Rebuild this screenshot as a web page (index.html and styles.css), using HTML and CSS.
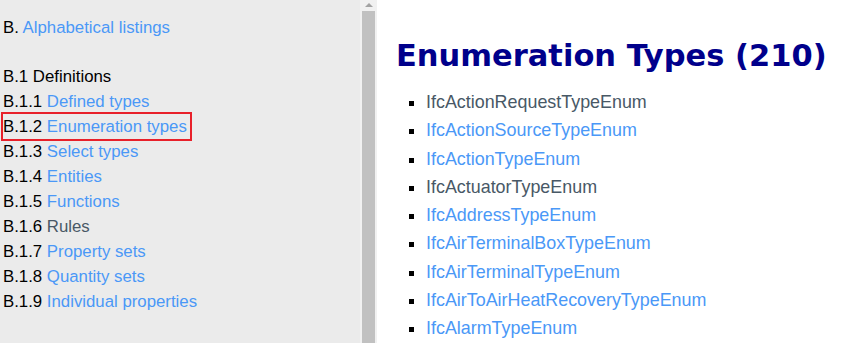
FILE: index.html
```html
<!DOCTYPE html>
<html lang="en">
<head>
    <meta charset="UTF-8">
    <title>Enumeration Types</title>
    <link rel="stylesheet" href="styles.css">
</head>
<body>
    <div class="frames">
        <div class="nav">
            <div class="nav-title">B. <a href="#">Alphabetical listings</a></div>
            <div class="nav-item">B.1 Definitions</div>
            <div class="nav-item">B.1.1 <a href="#">Defined types</a></div>
            <div class="nav-item current">B.1.2 <a href="#">Enumeration types</a></div>
            <div class="nav-item">B.1.3 <a href="#">Select types</a></div>
            <div class="nav-item">B.1.4 <a href="#">Entities</a></div>
            <div class="nav-item">B.1.5 <a href="#">Functions</a></div>
            <div class="nav-item">B.1.6 <a href="#" class="visited">Rules</a></div>
            <div class="nav-item">B.1.7 <a href="#">Property sets</a></div>
            <div class="nav-item">B.1.8 <a href="#">Quantity sets</a></div>
            <div class="nav-item">B.1.9 <a href="#">Individual properties</a></div>
        </div>
        <div class="scrollbar">
            <div class="arrow"></div>
            <div class="thumb"></div>
        </div>
        <div class="content">
            <h2>Enumeration Types (210)</h2>
            <ul class="types">
                <li><a href="#" class="visited">IfcActionRequestTypeEnum</a></li>
                <li><a href="#">IfcActionSourceTypeEnum</a></li>
                <li><a href="#">IfcActionTypeEnum</a></li>
                <li><a href="#" class="visited">IfcActuatorTypeEnum</a></li>
                <li><a href="#">IfcAddressTypeEnum</a></li>
                <li><a href="#">IfcAirTerminalBoxTypeEnum</a></li>
                <li><a href="#">IfcAirTerminalTypeEnum</a></li>
                <li><a href="#">IfcAirToAirHeatRecoveryTypeEnum</a></li>
                <li><a href="#">IfcAlarmTypeEnum</a></li>
            </ul>
        </div>
    </div>
</body>
</html>
```

FILE: styles.css
```css
body { margin: 0; font-family: "Liberation Sans", Arial, sans-serif; font-size: 16.8px; color: #000; }
a { color: #4a98f7; text-decoration: none; }
a.visited { color: #485866; }
.frames { display: flex; height: 343px; overflow: hidden; }
.nav { width: 357px; padding: 15px 0 0 3px; background-color: #ebebeb; }
.nav-title { line-height: 25px; margin-bottom: 24px; }
.nav-item { line-height: 25px; }
.nav-item.current { width: fit-content; margin: -2px 0 -2px -2px; padding-right: 3px; border: 2px solid #e8202a; position: relative; }
.scrollbar { width: 17px; background-color: #f1f1f1; display: flex; flex-direction: column; align-items: center; }
.arrow { width: 0; height: 0; margin: 3px 0 4px; border-left: 4px solid transparent; border-right: 4px solid transparent; border-bottom: 4px solid #a3a3a3; }
.thumb { width: 13px; flex: 1; background-color: #c1c1c1; }
.content { flex: 1; padding-left: 19px; background-color: #fff; }
h2 { margin: 38px 0 14px; font-family: "DejaVu Sans", Verdana, sans-serif; font-size: 30.5px; font-weight: bold; color: #00008b; line-height: 36px; }
.types { margin: 0; padding-left: 30px; list-style-type: square; font-size: 17.9px; }
.types li { line-height: 28.3px; }
```
